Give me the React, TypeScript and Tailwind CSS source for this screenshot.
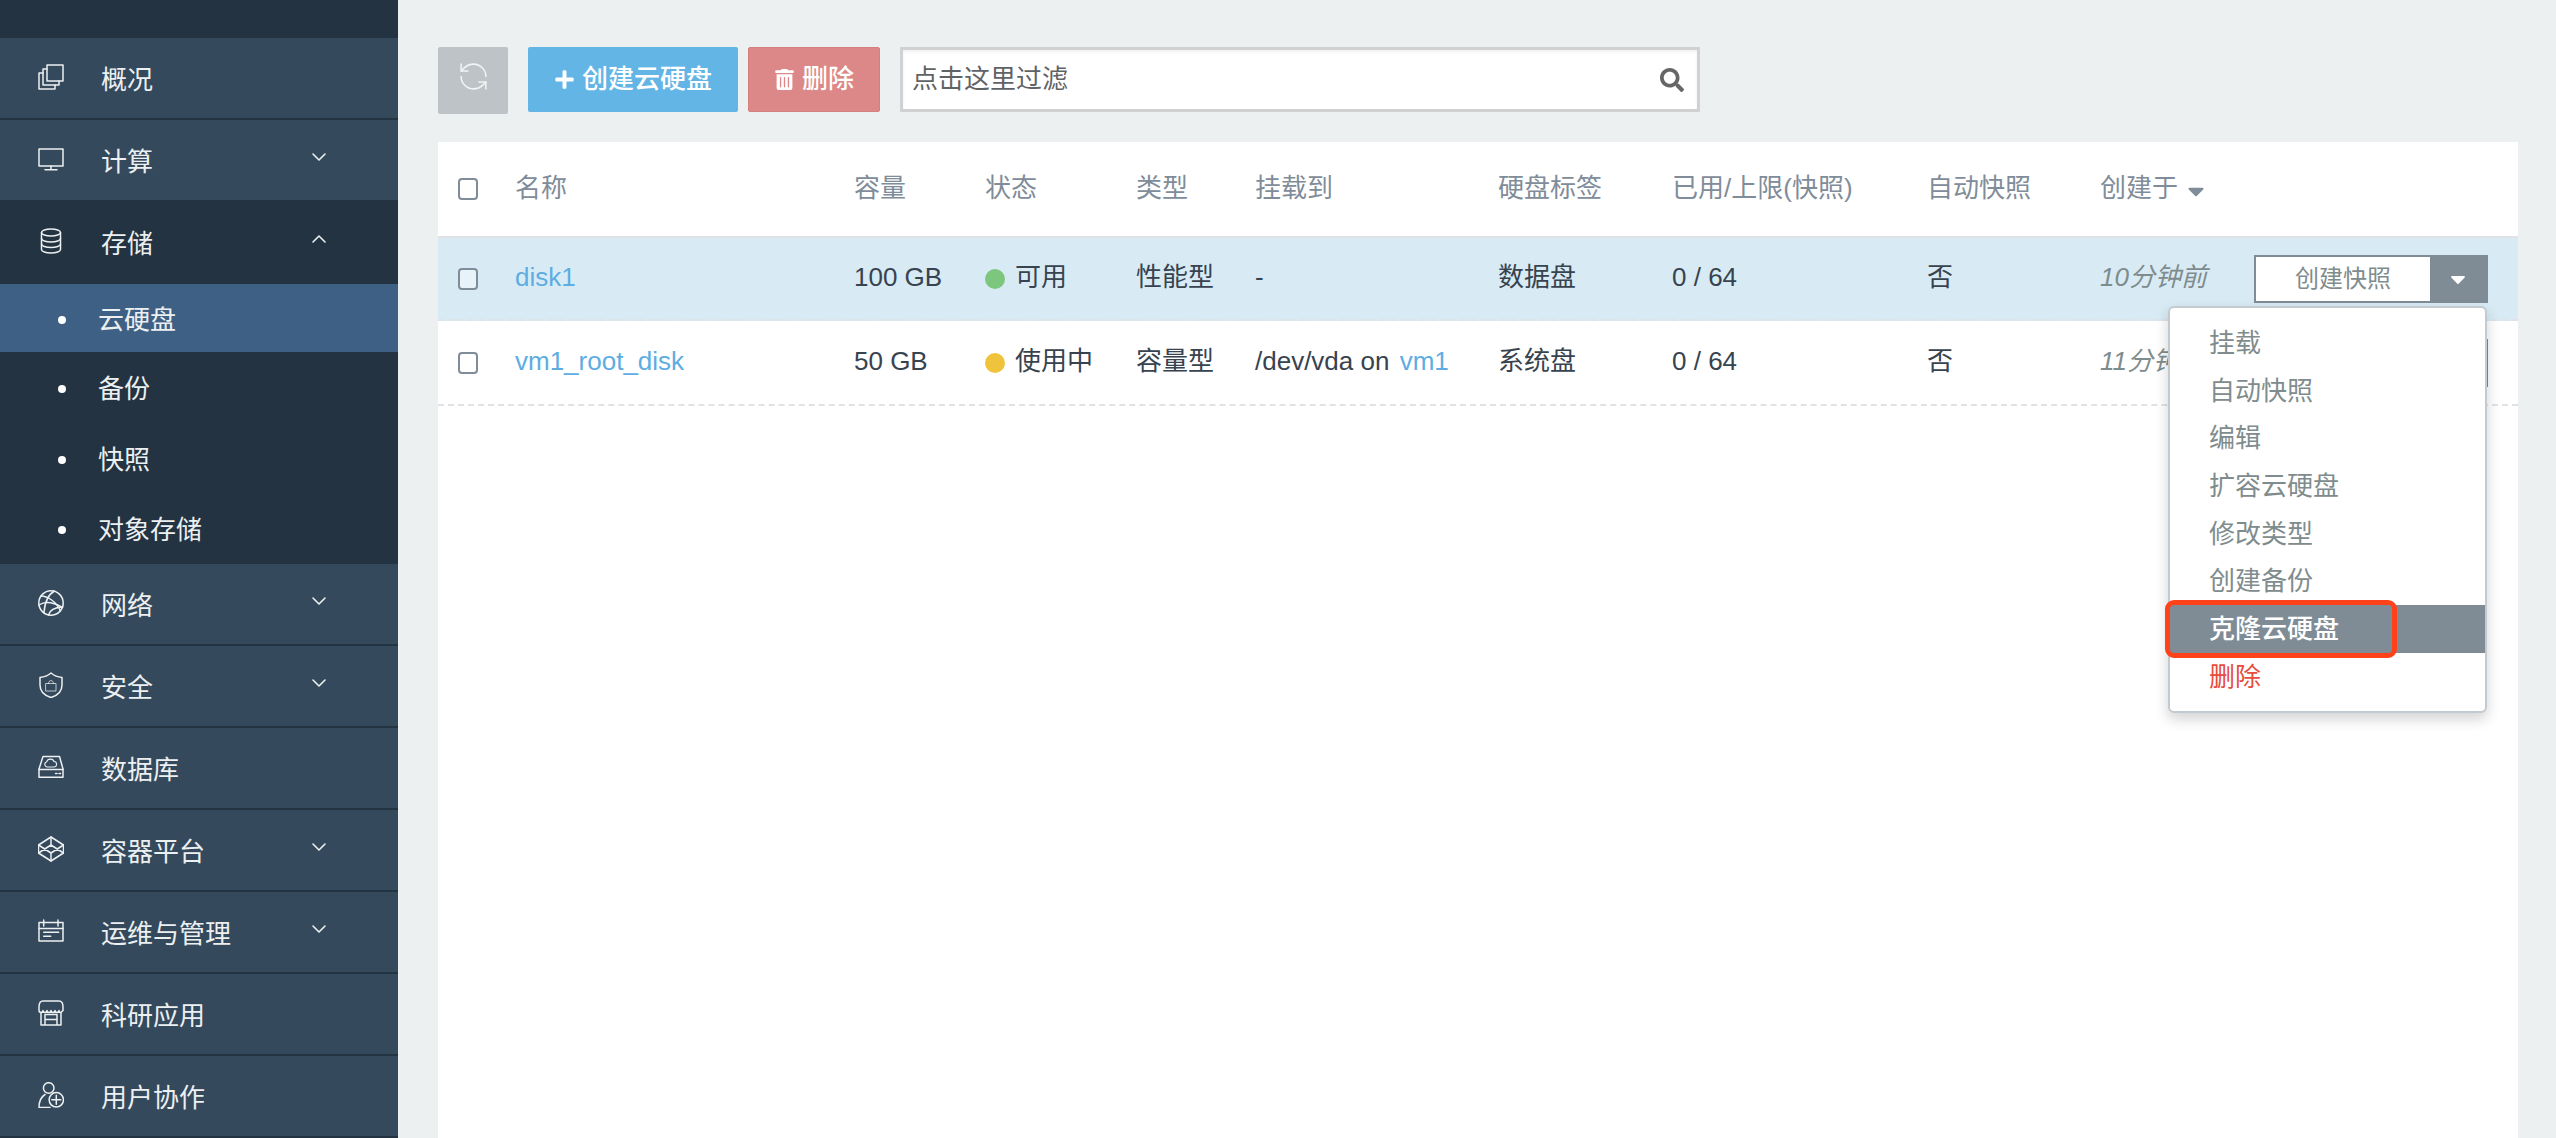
import type { ReactNode } from "react";
import { ChevronDown, ChevronUp, RefreshCcw } from "lucide-react";
import { FaCaretDown, FaPlus, FaSearch, FaTrashAlt } from "react-icons/fa";

const font = "font-['Liberation_Sans','Noto_Sans_CJK_SC',sans-serif]";

function Glyph({ children }: { children: ReactNode }) {
  return (
    <svg
      viewBox="0 0 26 26"
      className="-mt-[3px] h-[26px] w-[26px] shrink-0"
      fill="none"
      stroke="#ecf0f1"
      strokeWidth="1.5"
      strokeLinejoin="round"
      strokeLinecap="round"
    >
      {children}
    </svg>
  );
}

const icons = {
  overview: (
    <Glyph>
      <rect x="9" y="1" width="16" height="16" />
      <path d="M9 5H5v16h16v-4" />
      <path d="M5 9H1v16h16v-4" />
    </Glyph>
  ),
  compute: (
    <Glyph>
      <rect x="1" y="3" width="24" height="17" />
      <path d="M13 20v3.500M7 23.700h12" />
    </Glyph>
  ),
  storage: (
    <Glyph>
      <ellipse cx="13" cy="4.500" rx="9.500" ry="3.500" />
      <path d="M3.500 4.500V21.500c0 2 4.300 3.500 9.500 3.500s9.500-1.500 9.500-3.500V4.500" />
      <path d="M3.500 10.500c0 2 4.300 3.500 9.500 3.500s9.500-1.500 9.500-3.500M3.500 16c0 2 4.300 3.500 9.500 3.500s9.500-1.500 9.500-3.500" />
    </Glyph>
  ),
  network: (
    <Glyph>
      <circle cx="13" cy="13" r="12.200" />
      <path d="M3 6c6 0 15 5 19.500 15" />
      <path d="M1 15c5-3.500 13-3.500 23.500 2.500" />
      <path d="M16.500 1C11 4 7 10 6 22.500" />
      <path d="M10.500 25c1-4 5-7.500 14-8" />
    </Glyph>
  ),
  security: (
    <Glyph>
      <path d="M13 1c3 2.500 6.500 4 11 4.500V13c0 6-4.500 10.500-11 12.500C6.500 23.500 2 19 2 13V5.500C6.500 5 10 3.500 13 1Z" />
      <g strokeWidth="1" strokeOpacity="0.75">
        <rect x="8" y="11.500" width="10" height="7.500" />
        <path d="M10.500 11.500c0-4 5-4 5 0" />
      </g>
    </Glyph>
  ),
  database: (
    <Glyph>
      <path d="M5 2.500h16.500L25 15v8.300H1V15L5 2.500Z" />
      <path d="M1 15.500h24M17.500 19.500h1.500M21 19.500h1.500" />
      <path strokeWidth="1.100" d="M9.300 13a2.700 2.700 0 0 1-.5-5.300C9.600 4.500 15 4 16 7.500a2.800 2.800 0 0 1 .5 5.500H9.300Z" />
    </Glyph>
  ),
  container: (
    <Glyph>
      <path d="M13 1l12.500 8v8L13 25 .5 17V9L13 1Z" />
      <path d="M.5 9L13 17l12.500-8M.5 17L13 9l12.500 8M13 1v8M13 17v8" />
    </Glyph>
  ),
  ops: (
    <Glyph>
      <rect x="1" y="4.500" width="24" height="18.500" />
      <path d="M1 10.600h24M5.700 2v6M20 2v6M5.700 14.300h15M5.700 18.300h7" />
    </Glyph>
  ),
  research: (
    <Glyph>
      <path d="M5 1h16c3 0 4 3 4 6v3.500c-2 2.500-4 2.500-4 0 0 2.500-4 2.500-4 0 0 2.500-4 2.500-4 0 0 2.500-4 2.500-4 0 0 2.500-4 2.500-4 0 0 2.500-4 2.500-4 0V7c0-3 1-6 4-6Z" />
      <path d="M3 12.500V25h20V12.500M7 25V14.500h12V25M7 19.500h12" />
    </Glyph>
  ),
  users: (
    <Glyph>
      <circle cx="10.700" cy="6" r="5.300" />
      <path d="M1 25.500c0-6 2-10.500 6-13M1 25.500h11" />
      <circle cx="18.300" cy="17.800" r="7.200" />
      <path d="M18.300 13.300v9M13.800 17.800h9" />
    </Glyph>
  ),
};

function NavItem({ icon, label, arrow, open, last }: { icon: ReactNode; label: string; arrow?: boolean; open?: boolean; last?: boolean }) {
  return (
    <div
      className={
        open
          ? "flex h-[84px] items-center bg-[#243342] pl-[38px] pr-[67px]"
          : last
            ? "flex h-[80px] items-center bg-[#35495c] pl-[38px] pr-[67px]"
            : "flex h-[82px] items-center border-b-2 border-[#243342] bg-[#35495c] pl-[38px] pr-[67px]"
      }
    >
      {icon}
      <span className="ml-[37px] mt-[3px] flex-1 text-[26px] leading-none text-[#ecf0f1]">{label}</span>
      {arrow && (open ? <ChevronUp size={24} color="#ecf0f1" strokeWidth={1.6} className="-mt-[6px]" /> : <ChevronDown size={24} color="#ecf0f1" strokeWidth={1.6} className="-mt-[6px]" />)}
    </div>
  );
}

function SubItem({ label, active }: { label: string; active?: boolean }) {
  return (
    <div className={active ? "flex h-[68px] items-center bg-[#3f6085] pl-[58px] pt-[3px]" : "flex h-[70.700px] items-center pl-[58px] pt-[3px]"}>
      <span className="h-[8px] w-[8px] rounded-full bg-white" />
      <span className="ml-[32px] text-[26px] leading-none text-[#ecf0f1]">{label}</span>
    </div>
  );
}

function Sidebar() {
  return (
    <aside className="flex h-full w-[398px] shrink-0 flex-col overflow-hidden bg-[#243342]">
      <div className="h-[38px] shrink-0" />
      <NavItem icon={icons.overview} label="概况" />
      <NavItem icon={icons.compute} label="计算" arrow last />
      <NavItem icon={icons.storage} label="存储" arrow open />
      <SubItem label="云硬盘" active />
      <SubItem label="备份" />
      <SubItem label="快照" />
      <SubItem label="对象存储" />
      <NavItem icon={icons.network} label="网络" arrow />
      <NavItem icon={icons.security} label="安全" arrow />
      <NavItem icon={icons.database} label="数据库" />
      <NavItem icon={icons.container} label="容器平台" arrow />
      <NavItem icon={icons.ops} label="运维与管理" arrow />
      <NavItem icon={icons.research} label="科研应用" />
      <NavItem icon={icons.users} label="用户协作" />
    </aside>
  );
}

function Toolbar() {
  return (
    <div className="flex items-start">
      <button className="flex h-[67px] w-[70px] items-start justify-center rounded-[2px] bg-[#bdc3c7] pt-[13px]">
        <RefreshCcw size={33} color="#f2f4f5" strokeWidth={1.100} />
      </button>
      <button className="ml-[20px] flex h-[65px] w-[210px] items-center justify-center gap-[7px] rounded-[2px] bg-[#62b5e5] text-[26px] font-medium text-white">
        <FaPlus size={21} />
        创建云硬盘
      </button>
      <button className="ml-[10px] flex h-[65px] w-[132px] items-center justify-center gap-[7px] rounded-[2px] border border-[#d67f7f] bg-[#dd8888] text-[26px] font-medium text-white">
        <FaTrashAlt size={21} />
        删除
      </button>
      <div className="ml-[20px] flex h-[65px] w-[800px] items-center border-[3px] border-[#cfd1d3] bg-white pl-[9px] pr-[13px] shadow-[inset_0_2px_3px_rgba(0,0,0,0.06)]">
        <input
          placeholder="点击这里过滤"
          className="min-w-0 flex-1 bg-transparent text-[26px] outline-none placeholder:text-[#5f6366]"
        />
        <FaSearch size={24} color="#666666" />
      </div>
    </div>
  );
}

function Checkbox() {
  return <span className="mt-[3px] block h-[22px] w-[20px] rounded-[4px] border-2 border-[#7f8c99] bg-white/40" />;
}

const gridCols = "grid grid-cols-[77px_339px_131px_151px_119px_243px_174px_255px_173px_154px_1fr] items-center";

function ActionButton() {
  return (
    <div className="mr-[30px] mt-[3px] flex h-[48px] border-2 border-[#7f8c96] bg-white">
      <span className="flex flex-1 items-center justify-center text-[24px] leading-none text-[#7f8c8d]">创建快照</span>
      <span className="flex w-[56px] items-center justify-center bg-[#7f8c96] text-white">
        <FaCaretDown size={24} />
      </span>
    </div>
  );
}

function Row({ name, size, dot, status, kind, mount, tag, time, selected }: { name: string; size: string; dot: string; status: string; kind: string; mount: ReactNode; tag: string; time: string; selected?: boolean }) {
  return (
    <div className={`${gridCols} border-b-2 border-dashed border-[#dfe3e6] pb-[3px] text-[26px] leading-none text-[#37434f] ${selected ? "h-[83px] bg-[#d8ebf5]" : "h-[85px]"}`}>
      <div className="pl-[20px]">
        <Checkbox />
      </div>
      <a className="text-[#5dade2]">{name}</a>
      <div>{size}</div>
      <div className="flex items-center">
        <span className={`mt-[3px] h-[20px] w-[20px] rounded-full ${dot}`} />
        <span className="ml-[10px]">{status}</span>
      </div>
      <div>{kind}</div>
      <div className="whitespace-nowrap">{mount}</div>
      <div>{tag}</div>
      <div>0 / 64</div>
      <div>否</div>
      <div className="italic text-[#7f8c8d]">{time}</div>
      <ActionButton />
    </div>
  );
}

const menuItems = ["挂载", "自动快照", "编辑", "扩容云硬盘", "修改类型", "创建备份"];

function Menu() {
  return (
    <div className="absolute right-[31px] top-[164px] z-10 w-[319px] rounded-[6px] border-2 border-[#c3cad0] bg-white pb-[10px] pt-[11px] shadow-[0_6px_14px_rgba(0,0,0,0.18)]">
      {menuItems.map((item) => (
        <div key={item} className="flex h-[47.700px] items-center pl-[39px] text-[26px] leading-none text-[#7f8c8d]">
          {item}
        </div>
      ))}
      <div className="relative flex h-[48px] items-center bg-[#7f8c96] pl-[39px] text-[26px] font-medium leading-none text-white">
        克隆云硬盘
        <span className="absolute -left-[5px] -top-[5px] h-[58px] w-[232px] rounded-[9px] border-[5px] border-[#ff4219]" />
      </div>
      <div className="flex h-[47.700px] items-center pl-[39px] text-[26px] leading-none text-[#e74c3c]">删除</div>
    </div>
  );
}

function DiskTable() {
  const head = ["名称", "容量", "状态", "类型", "挂载到", "硬盘标签", "已用/上限(快照)", "自动快照"];
  return (
    <div className="relative mt-[28px] min-h-0 flex-1 bg-white">
      <div className={`${gridCols} h-[96px] border-b-2 border-[#dfe3e6] pb-[3px] text-[26px] leading-none text-[#7f8c99]`}>
        <div className="pl-[20px]">
          <Checkbox />
        </div>
        {head.map((h) => (
          <div key={h} className="whitespace-nowrap">
            {h}
          </div>
        ))}
        <div className="col-span-2 flex items-center">
          创建于
          <FaCaretDown size={26} className="ml-[5px] mt-[6px]" />
        </div>
      </div>
      <Row name="disk1" size="100 GB" dot="bg-[#7dc67d]" status="可用" kind="性能型" mount="-" tag="数据盘" time="10分钟前" selected />
      <Row
        name="vm1_root_disk"
        size="50 GB"
        dot="bg-[#f0c33c]"
        status="使用中"
        kind="容量型"
        mount={
          <>
            /dev/vda on <span className="ml-[3px] text-[#5dade2]">vm1</span>
          </>
        }
        tag="系统盘"
        time="11分钟前"
      />
      <Menu />
    </div>
  );
}

export default function App() {
  return (
    <div className={`${font} flex h-screen w-full overflow-hidden bg-[#ecf0f1]`}>
      <Sidebar />
      <main className="flex min-w-0 flex-1 flex-col pl-[40px] pr-[38px] pt-[47px]">
        <Toolbar />
        <DiskTable />
      </main>
    </div>
  );
}
